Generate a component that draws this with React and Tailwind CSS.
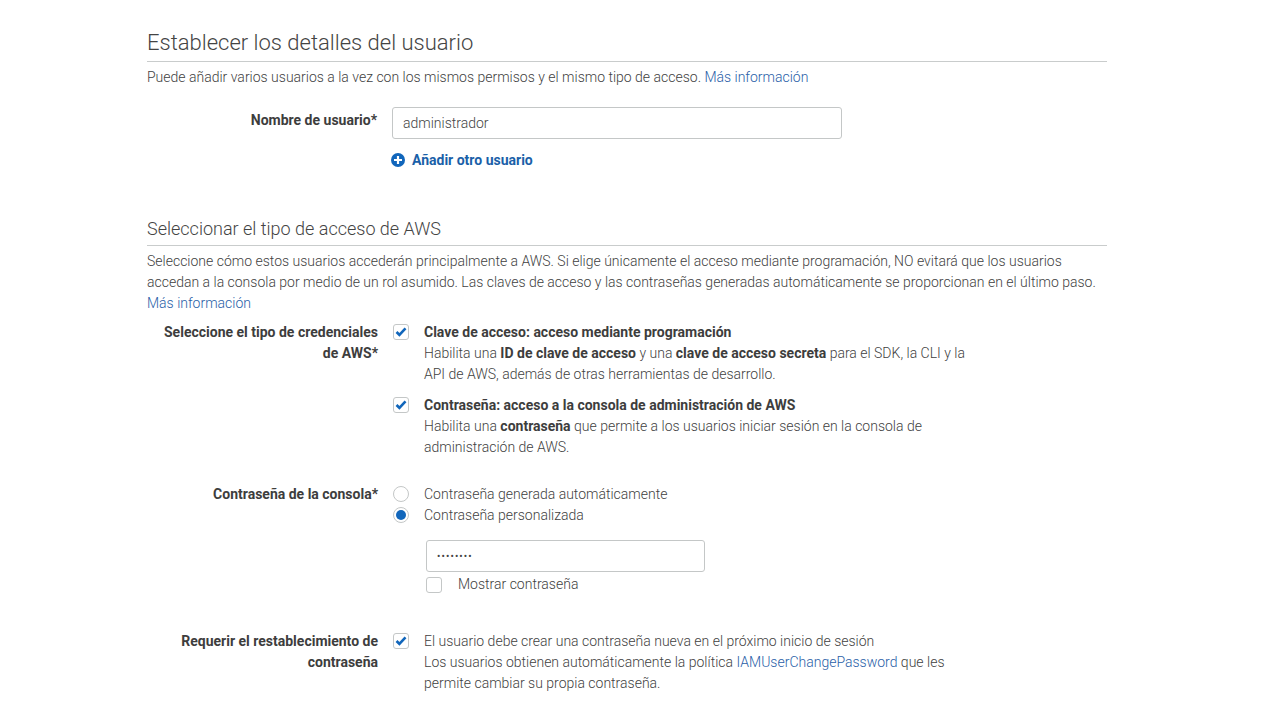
const Link = ({ children }) => <span className="text-[#2a61a8]">{children}</span>;

const Check = ({ checked }) => (
  <span className="flex h-[16px] w-[16px] shrink-0 items-center justify-center rounded-[3px] border border-[#c4c7c7] bg-white">
    {checked && (
      <svg width="12" height="10" viewBox="0 0 12 10" fill="none">
        <path d="M1.5 5 L4.4 7.8 L10.5 1.4" stroke="#1166bb" strokeWidth="2.6" />
      </svg>
    )}
  </span>
);

const Radio = ({ on }) => (
  <span className="mt-[-2px] flex h-[16px] w-[16px] shrink-0 items-center justify-center rounded-full border border-[#c4c7c7] bg-white">
    {on && <span className="h-[10px] w-[10px] rounded-full bg-[#1166bb]" />}
  </span>
);

const Label = ({ children, className = "" }) => (
  <div className={"w-[231px] shrink-0 text-right font-bold text-[#3d3d3d] " + className}>{children}</div>
);

const B = ({ children }) => <b className="font-bold text-[#3d3d3d]">{children}</b>;

export default function App() {
  return (
    <div className="h-[720px] w-[1280px] overflow-hidden bg-white pl-[147px] font-['Roboto',sans-serif] text-[14px] leading-[21px] font-light text-[#3f3f3f]">
      <div className="w-[960px]">
        <h2 className="mt-[29px] border-b border-[#c9cccc] pb-[4px] text-[22px] leading-[28px] font-light text-[#444]">
          Establecer los detalles del usuario
        </h2>
        <p className="mt-[5px]">
          Puede añadir varios usuarios a la vez con los mismos permisos y el mismo tipo de acceso. <Link>Más información</Link>
        </p>

        <div className="mt-[19px] flex gap-[14px]">
          <Label className="pt-[3px] pr-[1px]">Nombre de usuario*</Label>
          <div className="flex h-[32px] w-[450px] items-center rounded-[3px] border border-[#c4c7c7] px-[10px] text-[#444]">administrador</div>
        </div>
        <div className="mt-[11px] ml-[244px] flex items-center gap-[7px] font-bold text-[#1a5fa8]">
          <svg width="14" height="14" viewBox="0 0 14 14" className="mt-[-1px]">
            <circle cx="7" cy="7" r="7" fill="#1166bb" />
            <path d="M7 3 V11 M3 7 H11" stroke="#fff" strokeWidth="2.2" />
          </svg>
          Añadir otro usuario
        </div>

        <h3 className="mt-[45px] border-b border-[#c9cccc] pb-[3px] text-[18px] leading-[26px] font-light text-[#444]">
          Seleccionar el tipo de acceso de AWS
        </h3>
        <p className="mt-[5px]">
          Seleccione cómo estos usuarios accederán principalmente a AWS. Si elige únicamente el acceso mediante programación, NO evitará que los usuarios accedan a la consola por medio de un rol asumido. Las claves de acceso y las contraseñas generadas automáticamente se proporcionan en el último paso. <Link>Más información</Link>
        </p>

        <div className="mt-[8px] flex gap-[15px]">
          <Label className="pl-[10px]">Seleccione el tipo de credenciales de AWS*</Label>
          <div className="w-[575px]">
            <div className="flex gap-[15px]">
              <span className="mt-[2px]"><Check checked /></span>
              <div>
                <div className="font-bold text-[#3d3d3d]">Clave de acceso: acceso mediante programación</div>
                <div>Habilita una <B>ID de clave de acceso</B> y una <B>clave de acceso secreta</B> para el SDK, la CLI y la API de AWS, además de otras herramientas de desarrollo.</div>
              </div>
            </div>
            <div className="mt-[10px] flex gap-[15px]">
              <span className="mt-[2px]"><Check checked /></span>
              <div>
                <div className="font-bold text-[#3d3d3d]">Contraseña: acceso a la consola de administración de AWS</div>
                <div>Habilita una <B>contraseña</B> que permite a los usuarios iniciar sesión en la consola de administración de AWS.</div>
              </div>
            </div>
          </div>
        </div>

        <div className="mt-[26px] flex gap-[15px]">
          <Label>Contraseña de la consola*</Label>
          <div>
            <div className="flex items-center gap-[15px]"><Radio />Contraseña generada automáticamente</div>
            <div className="flex items-center gap-[15px]"><Radio on />Contraseña personalizada</div>
            <div className="mt-[14px] ml-[33px] flex h-[32px] w-[279px] items-center rounded-[3px] border border-[#c4c7c7] px-[10px] text-[10px] font-normal tracking-[1.1px] text-[#444]">••••••••</div>
            <div className="mt-[2px] ml-[33px] flex items-center gap-[16px]"><Check />Mostrar contraseña</div>
          </div>
        </div>

        <div className="mt-[36px] flex gap-[15px]">
          <Label className="pl-[10px]">Requerir el restablecimiento de contraseña</Label>
          <div className="flex w-[575px] gap-[15px]">
            <span className="mt-[2px]"><Check checked /></span>
            <div>
              <div>El usuario debe crear una contraseña nueva en el próximo inicio de sesión</div>
              <div>Los usuarios obtienen automáticamente la política <Link>IAMUserChangePassword</Link> que les permite cambiar su propia contraseña.</div>
            </div>
          </div>
        </div>
      </div>
    </div>
  );
}
